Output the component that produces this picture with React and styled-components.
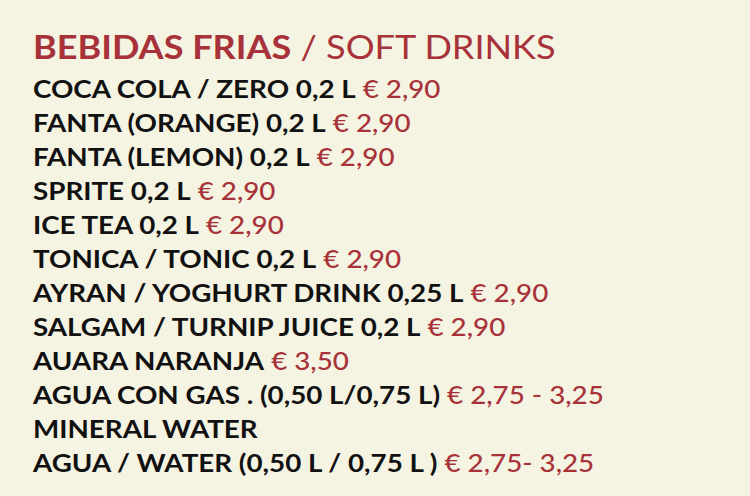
import styled, { createGlobalStyle } from 'styled-components';

const GlobalStyle = createGlobalStyle`
  html, body {
    margin: 0;
    background: #f5f3e1;
  }
`;

const items = [
  { name: 'COCA COLA / ZERO 0,2 L', price: '€ 2,90' },
  { name: 'FANTA (ORANGE) 0,2 L', price: '€ 2,90' },
  { name: 'FANTA (LEMON) 0,2 L', price: '€ 2,90' },
  { name: 'SPRITE 0,2 L', price: '€ 2,90' },
  { name: 'ICE TEA 0,2 L', price: '€ 2,90' },
  { name: 'TONICA / TONIC 0,2 L', price: '€ 2,90' },
  { name: 'AYRAN / YOGHURT DRINK 0,25 L', price: '€ 2,90' },
  { name: 'SALGAM / TURNIP JUICE 0,2 L', price: '€ 2,90' },
  { name: 'AUARA NARANJA', price: '€ 3,50' },
  { name: 'AGUA CON GAS . (0,50 L/0,75 L)', price: '€ 2,75 - 3,25' },
  { name: 'MINERAL WATER' },
  { name: 'AGUA / WATER (0,50 L / 0,75 L )', price: '€ 2,75- 3,25' },
];

const Menu = () => (
  <Page>
    <GlobalStyle />
    <Sheet>
      <Title>
        <strong>BEBIDAS FRIAS</strong> / SOFT DRINKS
      </Title>
      <List>
        {items.map((item) => (
          <Item key={item.name}>
            {item.name}
            {item.price && <Price> {item.price}</Price>}
          </Item>
        ))}
      </List>
    </Sheet>
  </Page>
);

export default Menu;

const Page = styled.div`
  width: 750px;
  height: 496px;
  overflow: hidden;
  box-sizing: border-box;
  padding: 27px 0 0 33px;
  background: #f5f3e1;
  font-family: Lato, "Open Sans", sans-serif;
`;

// the menu board is printed slightly wide
const Sheet = styled.div`
  transform: scaleX(1.11);
  transform-origin: left top;
`;

const Title = styled.h1`
  margin: 0 0 4px;
  font-size: 32.5px;
  line-height: 40px;
  font-weight: 400;
  white-space: nowrap;
  color: #a7323a;

  strong {
    font-weight: 700;
  }
`;

const List = styled.ul`
  margin: 0;
  padding: 0;
  list-style: none;
`;

const Item = styled.li`
  font-size: 25px;
  line-height: 34px;
  font-weight: 700;
  white-space: nowrap;
  color: #111;
`;

const Price = styled.span`
  font-weight: 500;
  color: #a7323a;
`;
